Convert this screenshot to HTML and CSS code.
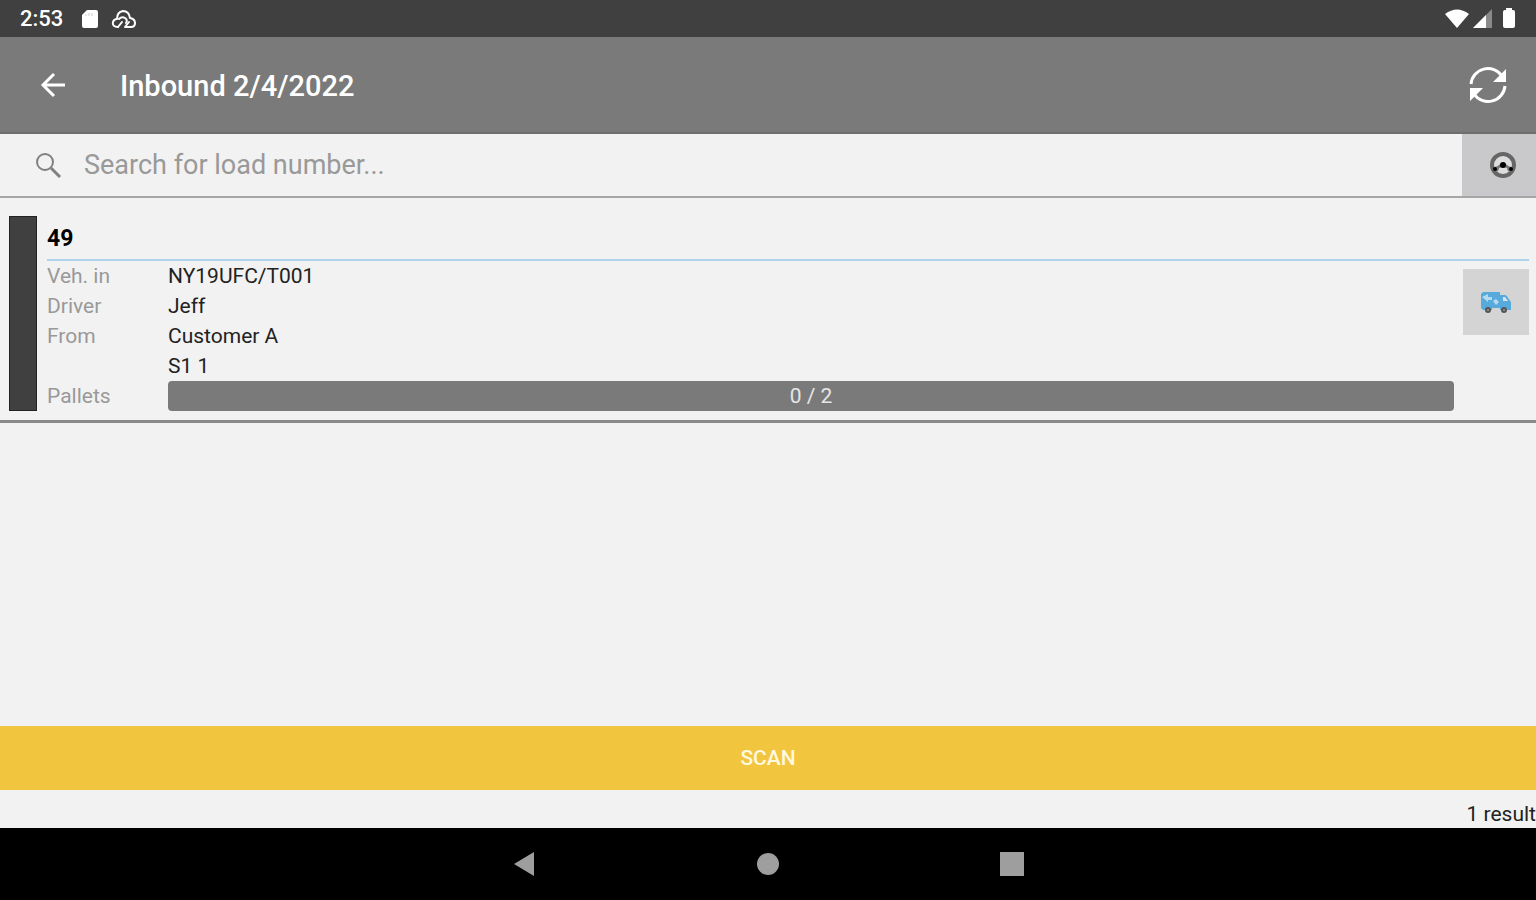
FILE: index.html
```
<!DOCTYPE html>
<html lang="en">
<head>
	<meta charset="UTF-8">
	<meta name="viewport" content="width=device-width, initial-scale=1.0">
	<title>Inbound</title>
	<link rel="stylesheet" href="styles.css">
</head>
<body>
	<div class="status-bar">
		<span class="clock">2:53</span>
		<svg class="sd-icon" width="18" height="20" viewBox="0 0 18 20"><path d="M6 1h9q2 0 2 2v14q0 2-2 2H3q-2 0-2-2V6z" fill="#fff"/><path d="M5 5v2M8 4v3M11 4v3" stroke="#ccc" stroke-width="1"/></svg>
		<svg class="cloud-icon" width="26" height="20" viewBox="0 0 26 20" fill="none" stroke="#fff" stroke-width="2" stroke-linecap="round" stroke-linejoin="round"><path d="M7 18C3 18 1 16 2 13Q3 10 6 10Q6 3 12 2Q18 2 19 9Q24 10 24 14Q24 18 20 18H14l4-5"/><path d="M7 18l4-5M8 10q3-3 6-1q3 2 1 5"/></svg>
		<svg class="wifi-icon" width="24" height="19" viewBox="0 0 24 19"><path d="M0 5Q12-4 24 5L12 19z" fill="#fff"/></svg>
		<svg width="19" height="19" viewBox="0 0 19 19"><path d="M19 0v19H0z" fill="#8a8a8a"/><path d="M13 6v13H0z" fill="#fff"/></svg>
		<svg class="battery-icon" width="14" height="21" viewBox="0 0 14 21"><path d="M4 0h6v2h1q2 0 2 2v14q0 2-2 2H3q-2 0-2-2V4q0-2 2-2h1z" fill="#fff"/></svg>
	</div>

	<header class="app-bar">
		<button class="icon-btn" type="button" aria-label="Back">
			<svg width="26" height="26" viewBox="0 0 26 26" fill="none" stroke="#fff" stroke-width="3"><path d="M25 13H3M14 2L3 13l11 11"/></svg>
		</button>
		<h1>Inbound 2/4/2022</h1>
		<button class="icon-btn" type="button" aria-label="Refresh">
			<svg width="38" height="38" viewBox="0 0 38 38"><path d="M2 18A17 17 0 0 1 33 10M36 20A17 17 0 0 1 5 28" fill="none" stroke="#fff" stroke-width="3"/><path d="M37 3v13H24zM1 35V22h13z" fill="#fff"/></svg>
		</button>
	</header>

	<form class="search-bar">
		<label for="search" aria-label="Search">
			<svg width="28" height="28" viewBox="0 0 28 28" fill="none" stroke="#808080"><circle cx="11" cy="11" r="8" stroke-width="2"/><path d="M17 17l9 9" stroke-width="3"/></svg>
		</label>
		<input type="text" id="search" placeholder="Search for load number...">
		<button class="filter-btn" type="button" aria-label="Filter by vehicle">
			<svg width="26" height="26" viewBox="0 0 26 26"><circle cx="13" cy="13" r="11" fill="#ddd" stroke="#666" stroke-width="4"/><path d="M4 15Q7 15 9 13Q13 9 17 13Q19 15 22 15L20 20Q17 19 17 16L13 15L9 16Q9 19 6 20z" fill="#777"/><circle cx="13" cy="13" r="3" fill="#000"/><circle cx="5" cy="17" r="2" fill="#000"/><circle cx="21" cy="17" r="2" fill="#000"/></svg>
		</button>
	</form>

	<main class="loads">
		<article class="load">
			<div class="load-status"></div>
			<div class="load-body">
				<h2>49</h2>
				<div class="load-info">
					<dl>
						<dt>Veh. in</dt><dd>NY19UFC/T001</dd>
						<dt>Driver</dt><dd>Jeff</dd>
						<dt>From</dt><dd>Customer A<br>S1 1</dd>
						<dt>Pallets</dt><dd class="progress">0 / 2</dd>
					</dl>
					<button class="truck-btn" type="button" aria-label="Vehicle">
						<svg width="30" height="22" viewBox="0 0 30 22"><path d="M2 0h17v3h5q2 0 3 3l3 4v8H2L0 16V2z" fill="#58a9dc"/><path d="M22 5h2l3 4h-5z" fill="#d5e5ef"/><path d="M1 5l6-3v3h4v3H7v2zM12 9l3-2 3 3-3 3z" fill="#b5d9ef"/><path d="M11 16h8v3h-8z" fill="#d4d4d4"/><circle cx="7" cy="18" r="3" fill="#555"/><circle cx="23" cy="18" r="3" fill="#555"/><circle cx="7" cy="18" r="1" fill="#999"/><circle cx="23" cy="18" r="1" fill="#999"/></svg>
					</button>
				</div>
			</div>
		</article>
	</main>

	<button class="scan-btn" type="button">SCAN</button>
	<p class="result-count">1 result</p>

	<nav class="nav-bar">
		<button class="icon-btn" type="button" aria-label="Back"><svg width="24" height="26" viewBox="0 0 24 26"><path d="M2 13L22 1v24z" fill="#9e9e9e"/></svg></button>
		<button class="icon-btn" type="button" aria-label="Home"><svg width="24" height="24" viewBox="0 0 24 24"><circle cx="12" cy="12" r="11" fill="#9e9e9e"/></svg></button>
		<button class="icon-btn" type="button" aria-label="Recent apps"><svg width="24" height="24" viewBox="0 0 24 24"><path d="M0 0h24v24H0z" fill="#9e9e9e"/></svg></button>
	</nav>
</body>
</html>
```
FILE: styles.css
```
* { box-sizing: border-box; }

body
{
	margin: 0;
	min-height: 100vh;
	display: flex;
	flex-direction: column;
	background-color: #f2f2f2;
	color: #222;
	font-family: Roboto, sans-serif;
	font-size: 21px;
	line-height: 30px;
}

h1, h2, dl, dd, p { margin: 0; }

svg { display: block; }

button
{
	border: 0;
	padding: 0;
	font-family: inherit;
	cursor: pointer;
}

.icon-btn { background: none; }

.status-bar
{
	display: flex;
	align-items: center;
	height: 37px;
	padding: 0 20px;
	background-color: #404040;
	color: #fff;
}

.clock
{
	font-size: 22px;
	font-weight: 500;
}

.sd-icon { margin-left: 18px; }

.cloud-icon { margin-left: 12px; }

.wifi-icon { margin-left: auto; margin-right: 4px; }

.battery-icon { margin-left: 10px; }

.app-bar
{
	display: flex;
	align-items: center;
	height: 97px;
	padding: 0 29px 0 40px;
	background-color: #7a7a7a;
	border-bottom: 2px solid #6e6e6e;
	color: #fff;
}

.app-bar h1
{
	flex: 1;
	margin-left: 54px;
	padding-top: 2px;
	font-size: 29px;
	font-weight: 500;
}

.search-bar
{
	display: flex;
	align-items: center;
	height: 64px;
	padding-left: 34px;
	border-bottom: 2px solid #a6a6a6;
}

.search-bar input
{
	flex: 1;
	min-width: 0;
	margin-left: 22px;
	padding: 0;
	border: 0;
	outline: 0;
	background: none;
	font-family: inherit;
	font-size: 27px;
}

.search-bar input::placeholder { color: #999; }

.filter-btn
{
	display: flex;
	align-items: center;
	justify-content: flex-end;
	align-self: stretch;
	width: 74px;
	padding-right: 20px;
	background-color: #c9c9cb;
}

.loads { flex: 1; }

.load
{
	display: flex;
	gap: 10px;
	padding: 18px 7px 9px 9px;
	border-bottom: 3px solid #8a8a8a;
}

.load-status
{
	width: 28px;
	background-color: #404040;
	border: 1px solid #222;
}

.load-body { flex: 1; }

.load h2
{
	padding: 8px 0 5px;
	border-bottom: 2px solid #add3ea;
	color: #000;
	font-size: 23px;
	font-weight: 700;
}

.load-info
{
	display: flex;
	align-items: flex-start;
	gap: 9px;
}

.load-info dl
{
	flex: 1;
	display: grid;
	grid-template-columns: 121px 1fr;
}

.load-info dt { color: #999; }

.progress
{
	border-radius: 4px;
	background-color: #7a7a7a;
	color: #e6e6e6;
	text-align: center;
}

.truck-btn
{
	display: flex;
	align-items: center;
	justify-content: center;
	width: 66px;
	height: 66px;
	margin-top: 8px;
	padding-top: 2px;
	background-color: #d4d4d4;
}

.scan-btn
{
	height: 64px;
	background-color: #f2c53f;
	color: #fff8e0;
	font-size: 21px;
	font-weight: 500;
}

.result-count
{
	padding-top: 10px;
	line-height: 28px;
	text-align: right;
}

.nav-bar
{
	display: flex;
	align-items: center;
	justify-content: center;
	gap: 220px;
	height: 72px;
	background-color: #000;
}
```
